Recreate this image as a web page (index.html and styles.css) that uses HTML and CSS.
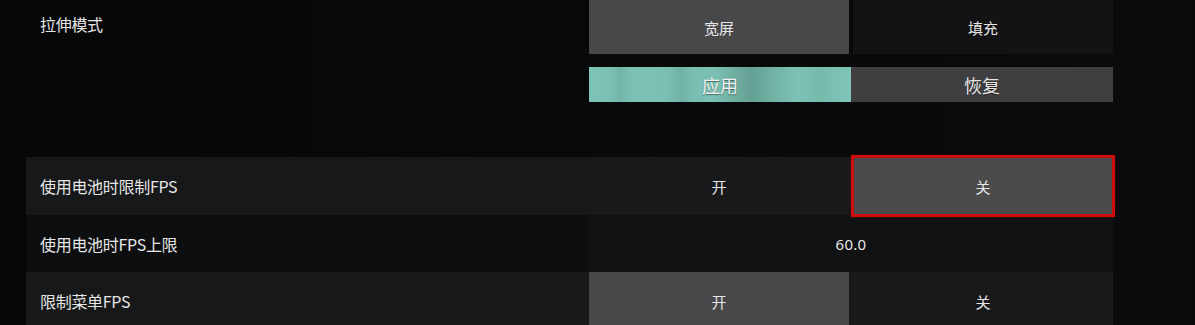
FILE: index.html
```html
<!DOCTYPE html>
<html lang="zh">
<head>
<meta charset="utf-8">
<title>设置</title>
<link rel="stylesheet" href="styles.css">
</head>
<body>
<div class="page">
  <div class="row row-top">
    <div class="label">拉伸模式</div>
    <div class="opts">
      <div class="btn btn-on">宽屏</div>
      <div class="btn btn-dark">填充</div>
    </div>
  </div>
  <div class="row row-apply">
    <div class="label"></div>
    <div class="opts opts-flush">
      <div class="act act-apply">应用</div>
      <div class="act act-reset">恢复</div>
    </div>
  </div>
  <div class="row row-set">
    <div class="label">使用电池时限制FPS</div>
    <div class="opts">
      <div class="btn btn-row">开</div>
      <div class="btn btn-on btn-focus">关</div>
    </div>
  </div>
  <div class="row row-set row-dim">
    <div class="label">使用电池时FPS上限</div>
    <div class="value">60.0</div>
  </div>
  <div class="row row-set">
    <div class="label">限制菜单FPS</div>
    <div class="opts">
      <div class="btn btn-on">开</div>
      <div class="btn btn-row">关</div>
    </div>
  </div>
</div>
</body>
</html>
```

FILE: styles.css
```css
html, body {
  margin: 0;
  padding: 0;
  height: 100%;
  overflow: hidden;
}

body {
  background: linear-gradient(90deg, #060709 0%, #08090b 60%, #0b0b0d 95%, #0a0a0c 100%);
  font-family: "Noto Sans CJK SC", "Noto Sans", sans-serif;
  color: #e6e6e6;
}

.page {
  width: 1087px;
  margin-left: 26px;
  display: flex;
  flex-direction: column;
}

.row {
  display: grid;
  grid-template-columns: 563px 524px;
}

.label {
  padding-left: 14px;
  font-size: 16px;
  display: flex;
  align-items: center;
  letter-spacing: -0.3px;
}

.opts {
  display: grid;
  grid-template-columns: 260px 260px;
  column-gap: 4px;
}

.opts-flush {
  grid-template-columns: 262px 262px;
  column-gap: 0;
}

.btn {
  display: flex;
  align-items: center;
  justify-content: center;
  font-size: 15px;
}

.btn-on {
  background: #48484a;
}

.btn-dark {
  background: #131315;
}

.btn-row {
  background: #18191b;
}

.btn-focus {
  background: #4b4b4d;
  outline: 3px solid #cf0d0d;
  outline-offset: -1px;
  box-shadow: 0 0 3px 2px rgba(200, 10, 10, 0.3);
  position: relative;
  z-index: 1;
}

.row-top {
  height: 54px;
}

.row-top .label {
  padding-bottom: 6px;
}

.row-apply {
  height: 35px;
  margin-top: 13px;
  margin-bottom: 55px;
}

.act {
  display: flex;
  align-items: center;
  justify-content: center;
  font-size: 18px;
  text-shadow: 0 1px 1px rgba(0, 0, 0, 0.45);
}

.act-apply {
  background: linear-gradient(90deg,
    #7ec4b6 0%, #7bc1b3 8%, #72b5a8 12%, #7cc2b4 17%,
    #7ac0b2 30%, #70b2a5 35%, #79bfb1 40%,
    #7bc1b3 48%, #6dac9f 56%, #64a194 62%, #6fb0a3 69%,
    #7cc2b4 80%, #76baac 88%, #7fc5b7 100%);
  color: #f2f2f2;
}

.act-reset {
  background: #3f3f41;
}

.row-set {
  height: 58px;
  background: #17181a;
}

.row-dim {
  height: 57px;
  background: #0d0e10;
}

.value {
  background: #111214;
  display: flex;
  align-items: center;
  justify-content: center;
  font-family: "Noto Sans", sans-serif;
  font-size: 15px;
  letter-spacing: 0.3px;
}
```
